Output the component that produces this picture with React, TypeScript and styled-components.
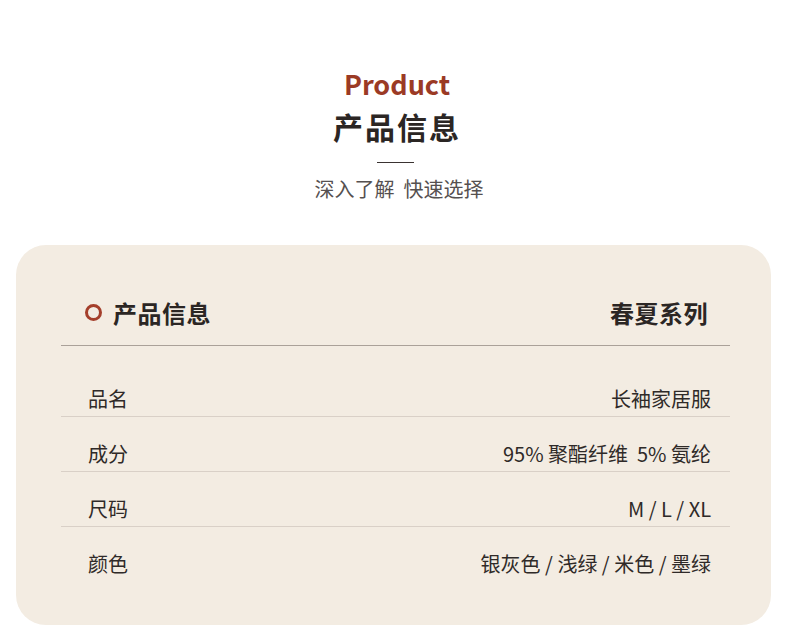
import styled, { createGlobalStyle } from 'styled-components';

const GlobalStyle = createGlobalStyle`
  body {
    margin: 0;
    background: #ffffff;
    font-family: "Noto Sans CJK SC", "Noto Sans", sans-serif;
  }
`;

const Page = styled.div`
  width: 790px;
  height: 634px;
  overflow: hidden;
  padding-top: 64px;
  box-sizing: border-box;
`;

const Heading = styled.div`
  display: flex;
  flex-direction: column;
  align-items: center;
`;

const EnTitle = styled.div`
  font-size: 27px;
  font-weight: 700;
  line-height: 40px;
  color: #9b3a25;
  padding-left: 4px;
`;

const CnTitle = styled.div`
  font-size: 30px;
  font-weight: 700;
  line-height: 44px;
  color: #2b2624;
  letter-spacing: 2px;
  padding-left: 4px;
`;

const Rule = styled.div`
  width: 37px;
  height: 1px;
  background: #3a3331;
  margin-top: 14px;
`;

const Subtitle = styled.div`
  margin-top: 12px;
  padding-left: 8px;
  font-size: 20px;
  line-height: 28px;
  color: #555050;
`;

const Card = styled.section`
  margin: 42px 19px 0 16px;
  height: 380px;
  background: #f3ece2;
  border-radius: 30px;
  padding: 0 41px 0 45px;
  box-sizing: border-box;
`;

const CardHeader = styled.div`
  display: flex;
  align-items: center;
  justify-content: space-between;
  height: 101px;
  padding: 34px 22px 0 24px;
  border-bottom: 1px solid #aaa199;
  box-sizing: border-box;
`;

const HeaderTitle = styled.div`
  display: flex;
  align-items: center;
  gap: 11px;
  font-size: 24px;
  font-weight: 700;
  letter-spacing: 0.5px;
  color: #2b2624;
`;

const Ring = styled.span`
  width: 11px;
  height: 11px;
  border: 3px solid #a43f2b;
  border-radius: 50%;
`;

const Series = styled.div`
  font-size: 24px;
  font-weight: 700;
  letter-spacing: 0.5px;
  color: #2b2624;
`;

const Row = styled.div<{ last?: boolean }>`
  display: flex;
  align-items: center;
  justify-content: space-between;
  height: 55px;
  padding: 18px 19px 0 27px;
  border-bottom: ${p => (p.last ? 'none' : '1px solid #d9d0c7')};
  box-sizing: border-box;
  font-size: 20px;
  color: #2f2a28;
  &:first-of-type {
    height: 71px;
    padding-top: 34px;
  }
`;

const Value = styled.span`
  white-space: pre;
`;

const rows = [
  ['品名', '长袖家居服'],
  ['成分', '95% 聚酯纤维  5% 氨纶'],
  ['尺码', 'M / L / XL'],
  ['颜色', '银灰色 / 浅绿 / 米色 / 墨绿'],
];

export default function App() {
  return (
    <Page>
      <GlobalStyle />
      <Heading>
        <EnTitle>Product</EnTitle>
        <CnTitle>产品信息</CnTitle>
        <Rule />
        <Subtitle>深入了解&nbsp;&nbsp;快速选择</Subtitle>
      </Heading>
      <Card>
        <CardHeader>
          <HeaderTitle>
            <Ring />
            产品信息
          </HeaderTitle>
          <Series>春夏系列</Series>
        </CardHeader>
        <div>
          {rows.map(([k, v], i) => (
            <Row key={k} last={i === rows.length - 1}>
              <span>{k}</span>
              <Value>{v}</Value>
            </Row>
          ))}
        </div>
      </Card>
    </Page>
  );
}
